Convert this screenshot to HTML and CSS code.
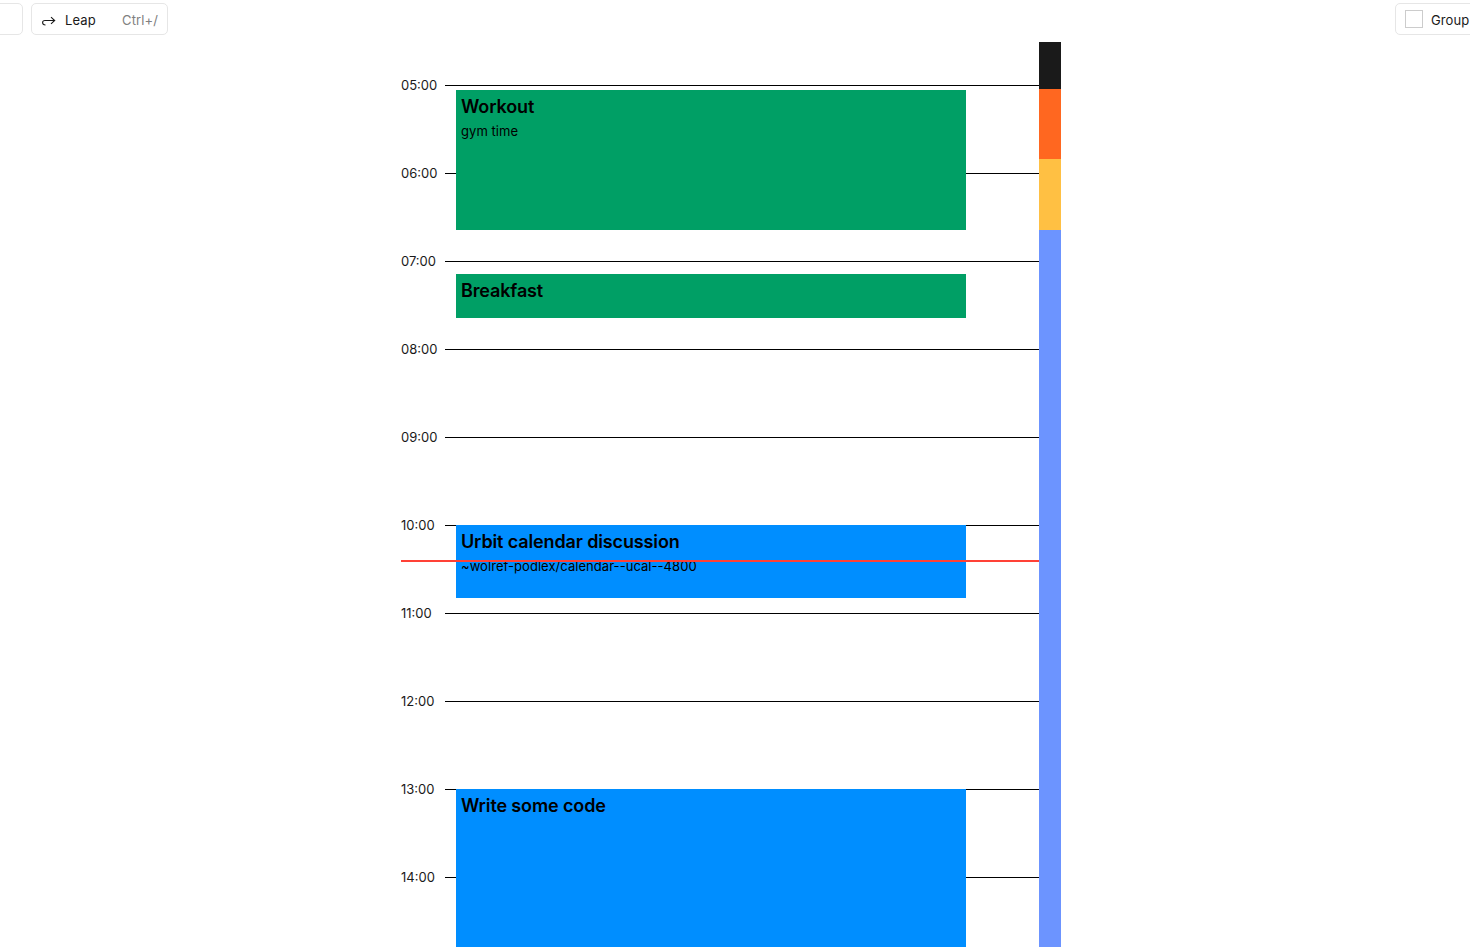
FILE: index.html
```html
<!DOCTYPE html>
<html>
<head>
    <title>Calendar</title>
    <link rel="stylesheet" href="styles.css">
</head>
<body>
    <div class="topbar">
        <div class="topbar-left">
            <button class="tool-btn back-btn"></button>
            <button class="tool-btn leap-btn">
                <svg class="leap-icon" width="14" height="10" viewBox="0 0 14 10" fill="none" stroke="#1a1a1a" stroke-width="1.1">
                    <path d="M3.5 9C1.5 9 .6 7.8 .6 6.5C.6 5.3 1.6 4.5 3 4.5H12.5"/>
                    <path d="M9 1.2L12.7 4.5L9 7.8"/>
                </svg>
                <span class="leap-label">Leap</span>
                <span class="leap-key">Ctrl+/</span>
            </button>
        </div>
        <button class="tool-btn group-btn">
            <span class="group-box"></span>
            <span class="group-label">Group</span>
        </button>
    </div>

    <div class="calendar">
        <div class="timeline">
            <div class="hour"><span class="hour-label">05:00</span><span class="hour-line"></span></div>
            <div class="hour"><span class="hour-label">06:00</span><span class="hour-line"></span></div>
            <div class="hour"><span class="hour-label">07:00</span><span class="hour-line"></span></div>
            <div class="hour"><span class="hour-label">08:00</span><span class="hour-line"></span></div>
            <div class="hour"><span class="hour-label">09:00</span><span class="hour-line"></span></div>
            <div class="hour"><span class="hour-label">10:00</span><span class="hour-line"></span></div>
            <div class="hour"><span class="hour-label">11:00</span><span class="hour-line"></span></div>
            <div class="hour"><span class="hour-label">12:00</span><span class="hour-line"></span></div>
            <div class="hour"><span class="hour-label">13:00</span><span class="hour-line"></span></div>
            <div class="hour"><span class="hour-label">14:00</span><span class="hour-line"></span></div>

            <div class="event green workout">
                <div class="event-title">Workout</div>
                <div class="event-note">gym time</div>
            </div>
            <div class="event green breakfast">
                <div class="event-title">Breakfast</div>
            </div>
            <div class="event blue discussion">
                <div class="event-title">Urbit calendar discussion</div>
                <div class="event-note">~wolref-podlex/calendar--ucal--4800</div>
            </div>
            <div class="event blue code">
                <div class="event-title">Write some code</div>
            </div>

            <div class="now-line"></div>
        </div>

        <div class="strip">
            <div class="strip-black"></div>
            <div class="strip-orange"></div>
            <div class="strip-yellow"></div>
            <div class="strip-blue"></div>
        </div>
    </div>
</body>
</html>
```

FILE: styles.css
```css
html, body {
    height: 947px;
    overflow: hidden;
}
body {
    margin: 0;
    background: #fff;
    color: #1a1a1a;
    font-family: Inter, "Noto Sans", sans-serif;
    font-size: 13px;
    letter-spacing: 0.1px;
}

/* top bar */
.topbar {
    display: flex;
    justify-content: space-between;
    align-items: flex-start;
    height: 42px;
    padding-top: 3px;
    box-sizing: border-box;
}
.topbar-left {
    display: flex;
    gap: 8px;
    margin-left: -40px;
}
.tool-btn {
    display: flex;
    align-items: center;
    height: 32px;
    padding: 0;
    background: #fff;
    border: 1px solid #e6e6e6;
    border-radius: 5px;
    font: inherit;
    letter-spacing: inherit;
    color: inherit;
}
.back-btn {
    width: 63px;
}
.leap-btn {
    width: 137px;
    padding: 2px 9px 0 10px;
    box-sizing: border-box;
}
.leap-icon {
    margin-top: 2px;
}
.leap-label {
    margin-left: 9px;
}
.leap-key {
    margin-left: auto;
    color: #808080;
}
.group-btn {
    width: 90px;
    margin-right: -15px;
    padding: 0 0 0 9px;
    box-sizing: border-box;
    border-radius: 5px 0 0 5px;
}
.group-box {
    width: 16px;
    height: 16px;
    border: 1px solid #ccc;
    margin-right: 8px;
    flex-shrink: 0;
}
.group-label {
    margin-top: 2px;
}

/* calendar */
.calendar {
    display: flex;
    width: 660px;
    margin-left: 401px;
}
.timeline {
    position: relative;
    width: 638px;
    height: 905px;
    margin-top: -1px;
}
.hour {
    display: flex;
    align-items: center;
    height: 88px;
}
.hour-label {
    width: 44px;
    line-height: 16px;
    letter-spacing: 0;
}
.hour-line {
    flex: 1;
    height: 1px;
    background: #000;
}

/* events sit on the time axis */
.event {
    position: absolute;
    left: 55px;
    width: 510px;
    padding: 5px;
    box-sizing: border-box;
    color: #000;
}
.green {
    background: #009f65;
}
.blue {
    background: #008eff;
}
.workout {
    top: 49px;
    height: 140px;
}
.breakfast {
    top: 233px;
    height: 44px;
}
.discussion {
    top: 484px;
    height: 73px;
}
.code {
    top: 748px;
    height: 200px;
}
.event-title {
    font-size: 18px;
    font-weight: 600;
    line-height: 24px;
    letter-spacing: -0.13px;
}
.event-note {
    margin-top: 2px;
    line-height: 20px;
    letter-spacing: 0.05px;
}
.now-line {
    position: absolute;
    left: 0;
    right: 0;
    top: 519px;
    height: 2px;
    background: #ff4136;
}

/* day overview strip */
.strip {
    display: flex;
    flex-direction: column;
    width: 22px;
    height: 905px;
}
.strip-black {
    height: 47px;
    background: #1a1a1a;
}
.strip-orange {
    height: 70px;
    background: #ff6720;
}
.strip-yellow {
    height: 71px;
    background: #ffc043;
}
.strip-blue {
    flex: 1;
    background: #6c94ff;
}
```
